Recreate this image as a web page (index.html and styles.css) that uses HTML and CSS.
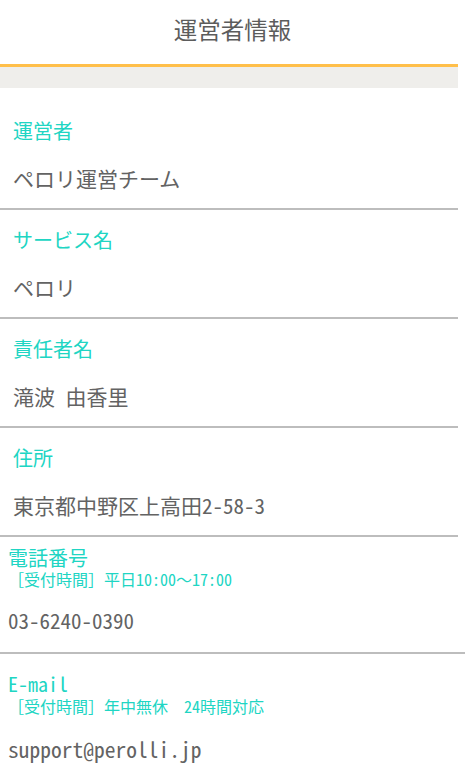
FILE: index.html
```html
<!DOCTYPE html>
<html lang="ja">
<head>
<meta charset="utf-8">
<title>運営者情報</title>
<link rel="stylesheet" href="styles.css">
</head>
<body>
<div class="page">
  <header class="title-bar">運営者情報</header>
  <div class="band"></div>
  <div class="list">
    <section class="item">
      <div class="label">運営者</div>
      <div class="value">ペロリ運営チーム</div>
    </section>
    <section class="item">
      <div class="label">サービス名</div>
      <div class="value">ペロリ</div>
    </section>
    <section class="item">
      <div class="label">責任者名</div>
      <div class="value">滝波&#8194;由香里</div>
    </section>
    <section class="item">
      <div class="label">住所</div>
      <div class="value">東京都中野区上高田<span class="hw">2-58-3</span></div>
    </section>
    <section class="item contact tel">
      <div class="label">電話番号</div>
      <div class="sub">［受付時間］平日<span class="hw">10:00</span>〜<span class="hw">17:00</span></div>
      <div class="value hw">03-6240-0390</div>
    </section>
    <section class="item contact mail">
      <div class="label hw">E-mail</div>
      <div class="sub">［受付時間］年中無休　<span class="hw">24</span>時間対応</div>
      <div class="value hw">support@perolli.jp</div>
    </section>
  </div>
</div>
</body>
</html>
```
FILE: styles.css
```css
html, body {
  margin: 0;
  padding: 0;
  background: #ffffff;
}
body {
  font-family: "Noto Sans CJK JP", "Noto Sans", sans-serif;
  color: #636363;
}
.page {
  width: 458px;
}
.hw {
  font-feature-settings: "hwid" 1;
}
.title-bar {
  height: 64px;
  line-height: 58px;
  padding-left: 7px;
  text-align: center;
  font-size: 23.5px;
  color: #5c5c5c;
}
.band {
  height: 21px;
  border-top: 3px solid #ffbf4a;
  background: #efeeeb;
}
.list {
  padding-top: 13px;
}
.item {
  padding: 15px 0 15px 13px;
  border-bottom: 2px solid #bdbdbd;
}
.label {
  font-size: 20px;
  line-height: 30px;
  color: #20d5c3;
}
.value {
  margin-top: 17px;
  font-size: 21px;
  line-height: 30px;
  color: #636363;
}
.contact {
  padding-left: 8px;
}
.contact .label {
  line-height: 22px;
}
.sub {
  font-size: 16px;
  line-height: 20px;
  color: #20d5c3;
}
.tel {
  padding-top: 10px;
  padding-bottom: 17px;
  width: 457px;
}
.tel .value {
  margin-top: 16px;
}
.mail {
  padding-top: 19px;
  border-bottom: none;
}
.mail .sub {
  margin-top: 1px;
}
.mail .value {
  margin-top: 18px;
  font-size: 21.5px;
}
```
